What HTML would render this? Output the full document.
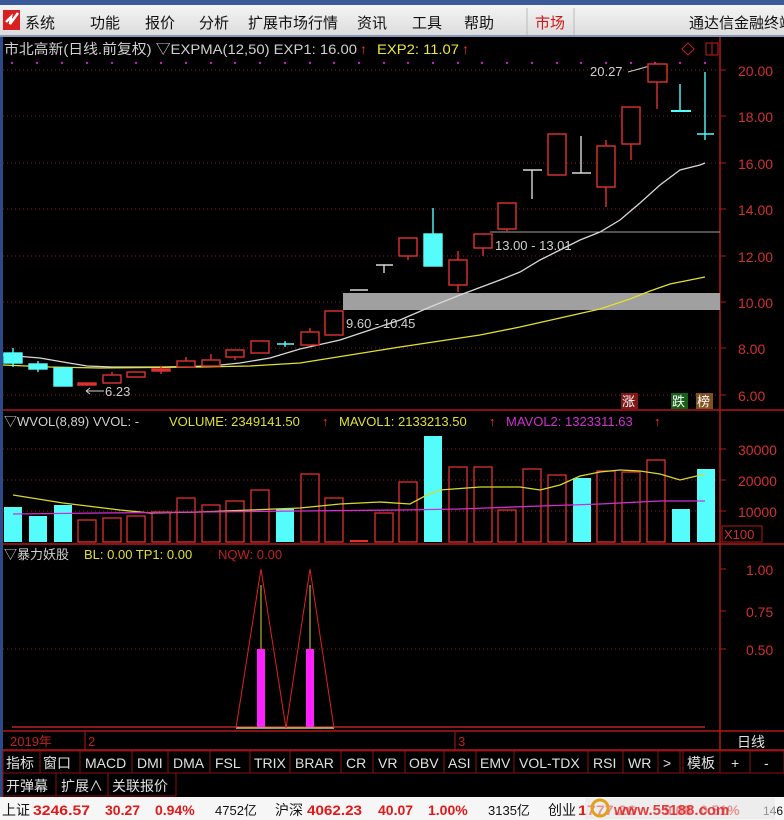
<!DOCTYPE html>
<html><head><meta charset="utf-8"><style>
html,body{margin:0;padding:0;width:784px;height:820px;overflow:hidden;background:#000}
svg{display:block}
text{font-family:"Liberation Sans","Noto Sans CJK SC",sans-serif}
</style></head><body>
<svg width="784" height="820" viewBox="0 0 784 820" xmlns="http://www.w3.org/2000/svg">
<defs>
<linearGradient id="tb" x1="0" y1="0" x2="0" y2="1"><stop offset="0" stop-color="#f4f4f4"/><stop offset="1" stop-color="#dcdcdc"/></linearGradient>
</defs>
<rect x="0" y="0" width="784" height="820" fill="#000"/>
<!-- top bar -->
<rect x="0" y="0" width="784" height="5" fill="#3a5a9a"/>
<rect x="0" y="5" width="784" height="31" fill="url(#tb)"/>
<rect x="0" y="35" width="784" height="2" fill="#8898b8"/>
<path d="M3 10 L20 10 L20 30 L3 30 Z" fill="#d82020"/>
<path d="M6 22 L11 17 L10 24 L18 13" stroke="#fff" stroke-width="2.5" fill="none"/>
<g font-size="15" fill="#111">
<text x="25" y="28">系统</text><text x="90" y="28">功能</text><text x="145" y="28">报价</text><text x="199" y="28">分析</text><text x="248" y="28">扩展市场行情</text><text x="357" y="28">资讯</text><text x="412" y="28">工具</text><text x="464" y="28">帮助</text>
<text x="535" y="28" fill="#d01818">市场</text>
<text x="689" y="28">通达信金融终端</text>
</g>
<line x1="527" y1="8" x2="527" y2="35" stroke="#bbb"/><line x1="574" y1="8" x2="574" y2="35" stroke="#bbb"/>
<!-- left blue strip -->
<rect x="0" y="37" width="3" height="760" fill="#2a4a8a"/>
<!-- grid -->
<g stroke="#8a1a1a" stroke-dasharray="1,3">
<line x1="3" y1="70" x2="720" y2="70"/><line x1="3" y1="116" x2="720" y2="116"/><line x1="3" y1="163" x2="720" y2="163"/><line x1="3" y1="209" x2="720" y2="209"/><line x1="3" y1="256" x2="720" y2="256"/><line x1="3" y1="302" x2="720" y2="302"/><line x1="3" y1="348" x2="720" y2="348"/><line x1="3" y1="395" x2="720" y2="395"/>
<line x1="3" y1="449" x2="720" y2="449"/><line x1="3" y1="480" x2="720" y2="480"/><line x1="3" y1="511" x2="720" y2="511"/>
<line x1="3" y1="649" x2="720" y2="649"/>
</g>
<!-- panel separators -->
<g stroke="#b01818" stroke-width="1.5">
<line x1="720" y1="37" x2="720" y2="750"/>
<line x1="3" y1="410" x2="784" y2="410"/>
<line x1="3" y1="544" x2="784" y2="544"/>
<line x1="3" y1="731" x2="784" y2="731"/>
<line x1="3" y1="750" x2="784" y2="750"/>
</g>
<!-- header -->
<g font-size="14">
<text x="4" y="54" fill="#d0d0d0" textLength="353" lengthAdjust="spacingAndGlyphs">市北高新(日线.前复权) ▽EXPMA(12,50)  EXP1: 16.00</text>
<text x="360" y="54" fill="#ff3030">↑</text>
<text x="377" y="54" fill="#e8e840" textLength="82" lengthAdjust="spacingAndGlyphs">EXP2: 11.07</text>
<text x="462" y="54" fill="#ff3030">↑</text>
</g>
<path d="M688 43 L694 49 L688 55 L682 49 Z" stroke="#c02020" fill="none"/>
<rect x="706" y="43" width="12" height="12" stroke="#c02020" fill="none"/><line x1="712" y1="43" x2="712" y2="55" stroke="#c02020"/>
<g fill="#c020c0">
<circle cx="12" cy="63" r="1.2"/><circle cx="37" cy="63" r="1.2"/><circle cx="62" cy="63" r="1.2"/><circle cx="87" cy="63" r="1.2"/><circle cx="112" cy="63" r="1.2"/><circle cx="136" cy="63" r="1.2"/><circle cx="161" cy="63" r="1.2"/><circle cx="186" cy="63" r="1.2"/><circle cx="211" cy="63" r="1.2"/><circle cx="235" cy="63" r="1.2"/><circle cx="260" cy="63" r="1.2"/><circle cx="285" cy="63" r="1.2"/><circle cx="310" cy="63" r="1.2"/><circle cx="334" cy="63" r="1.2"/><circle cx="359" cy="63" r="1.2"/><circle cx="384" cy="63" r="1.2"/><circle cx="408" cy="63" r="1.2"/><circle cx="433" cy="63" r="1.2"/><circle cx="458" cy="63" r="1.2"/><circle cx="482" cy="63" r="1.2"/><circle cx="507" cy="63" r="1.2"/><circle cx="532" cy="63" r="1.2"/><circle cx="557" cy="63" r="1.2"/><circle cx="581" cy="63" r="1.2"/><circle cx="606" cy="63" r="1.2"/><circle cx="631" cy="63" r="1.2"/><circle cx="655" cy="63" r="1.2"/><circle cx="680" cy="63" r="1.2"/><circle cx="705" cy="63" r="1.2"/>
</g>
<!-- price axis labels -->
<g font-size="14" fill="#d03030">
<text x="738" y="76">20.00</text><text x="738" y="122">18.00</text><text x="738" y="169">16.00</text><text x="738" y="215">14.00</text><text x="738" y="262">12.00</text><text x="738" y="308">10.00</text><text x="738" y="354">8.00</text><text x="738" y="401">6.00</text>
<text x="738" y="455">30000</text><text x="738" y="486">20000</text><text x="738" y="517">10000</text>
<text x="746" y="575">1.00</text><text x="746" y="617">0.75</text><text x="746" y="655">0.50</text>
</g>
<g stroke="#b01818">
<line x1="720" y1="70" x2="726" y2="70"/><line x1="720" y1="116" x2="726" y2="116"/><line x1="720" y1="163" x2="726" y2="163"/><line x1="720" y1="209" x2="726" y2="209"/><line x1="720" y1="256" x2="726" y2="256"/><line x1="720" y1="302" x2="726" y2="302"/><line x1="720" y1="348" x2="726" y2="348"/><line x1="720" y1="395" x2="726" y2="395"/>
<line x1="720" y1="449" x2="726" y2="449"/><line x1="720" y1="480" x2="726" y2="480"/><line x1="720" y1="511" x2="726" y2="511"/>
<line x1="720" y1="569" x2="726" y2="569"/><line x1="720" y1="611" x2="726" y2="611"/><line x1="720" y1="649" x2="726" y2="649"/>
</g>
<rect x="722" y="526" width="40" height="16" stroke="#b01818" fill="none"/>
<text x="724" y="539" font-size="13" fill="#d03030">X100</text>
<!-- gray zone -->
<rect x="343" y="293" width="377" height="17" fill="#a0a0a0"/>
<line x1="490" y1="232" x2="720" y2="232" stroke="#a0a0a0"/>
<g font-size="13" fill="#d0d0d0">
<text x="346" y="328">9.60 - 10.45</text>
<text x="495" y="250">13.00 - 13.01</text>
<text x="105" y="396">6.23</text>
<text x="590" y="76">20.27</text>
</g>
<path d="M86 391 L104 391 M86 391 L90 388 M86 391 L90 394" stroke="#d0d0d0" fill="none"/>
<path d="M628 72 L646 67 L652 66" stroke="#d0d0d0" fill="none"/>
<!-- EMA lines -->
<polyline points="3,355 40,358 63,362 87,366 112,367 161,367 211,366 240,363 270,358 300,349 340,340 370,330 400,320 430,307 460,295 500,280 520,272 540,260 560,250 580,240 600,232 620,220 640,203 660,185 680,170 700,165 705,163" stroke="#d8d8d8" stroke-width="1.3" fill="none"/>
<polyline points="3,365 50,367 100,368 200,367 250,366 300,363 350,355 400,347 440,341 480,335 520,327 560,318 600,309 630,299 650,291 670,284 690,280 705,277" stroke="#e0e030" stroke-width="1.3" fill="none"/>
<!-- candles -->
<g stroke="#e03030" stroke-width="1.4" fill="#000">
<line x1="87" y1="383" x2="87" y2="386"/><rect x="78" y="383" width="18" height="2" fill="#e03030"/>
<line x1="112" y1="372" x2="112" y2="375"/><rect x="103" y="375" width="18" height="8"/>
<rect x="127" y="372" width="18" height="5"/>
<line x1="161" y1="366" x2="161" y2="374"/><rect x="152" y="369" width="18" height="2" fill="#e03030"/>
<line x1="186" y1="357" x2="186" y2="361"/><rect x="177" y="361" width="18" height="6"/>
<line x1="211" y1="354" x2="211" y2="360"/><rect x="202" y="360" width="18" height="6"/>
<line x1="235" y1="357" x2="235" y2="360"/><rect x="226" y="350" width="18" height="7"/>
<rect x="251" y="341" width="18" height="12"/>
<line x1="310" y1="328" x2="310" y2="332"/><rect x="301" y="332" width="18" height="13"/>
<rect x="325" y="311" width="18" height="24"/>
<line x1="408" y1="256" x2="408" y2="260"/><rect x="399" y="238" width="18" height="18"/>
<line x1="458" y1="251" x2="458" y2="260"/><line x1="458" y1="285" x2="458" y2="292"/><rect x="449" y="260" width="18" height="25"/>
<line x1="483" y1="248" x2="483" y2="256"/><rect x="474" y="234" width="18" height="14"/>
<line x1="507" y1="229" x2="507" y2="232"/><rect x="498" y="203" width="18" height="26"/>
<rect x="548" y="134" width="18" height="41"/>
<line x1="606" y1="140" x2="606" y2="146"/><line x1="606" y1="187" x2="606" y2="207"/><rect x="597" y="146" width="18" height="41"/>
<line x1="631" y1="144" x2="631" y2="160"/><rect x="622" y="107" width="18" height="37"/>
<line x1="657" y1="82" x2="657" y2="109"/><rect x="648" y="64" width="19" height="18"/>
</g>
<g stroke="#d8d8d8" stroke-width="1.4">
<line x1="350" y1="290" x2="368" y2="290"/>
<line x1="376" y1="265" x2="393" y2="265"/><line x1="384" y1="265" x2="384" y2="273"/>
<line x1="523" y1="170" x2="542" y2="170"/><line x1="532" y1="170" x2="532" y2="199"/>
<line x1="572" y1="173" x2="591" y2="173"/><line x1="581" y1="136" x2="581" y2="173"/>
</g>
<g fill="#54fcfc" stroke="#54fcfc" stroke-width="1.4">
<line x1="13" y1="348" x2="13" y2="367"/><rect x="4" y="353" width="18" height="10"/>
<line x1="38" y1="361" x2="38" y2="372"/><rect x="29" y="364" width="18" height="5"/>
<rect x="54" y="368" width="18" height="18"/>
<line x1="277" y1="344" x2="294" y2="344"/><line x1="285" y1="341" x2="285" y2="347"/>
<line x1="433" y1="208" x2="433" y2="234"/><rect x="424" y="234" width="18" height="32"/>
<line x1="680" y1="84" x2="680" y2="111"/><line x1="671" y1="111" x2="691" y2="111" stroke-width="2"/>
<line x1="705" y1="72" x2="705" y2="140"/><line x1="697" y1="134" x2="714" y2="134"/>
</g>
<!-- 涨 跌 榜 -->
<g font-size="13">
<rect x="621" y="393" width="17" height="16" fill="#801818"/><text x="622" y="406" fill="#fff">涨</text>
<rect x="671" y="393" width="17" height="16" fill="#186018"/><text x="672" y="406" fill="#fff">跌</text>
<rect x="696" y="393" width="17" height="16" fill="#805020"/><text x="697" y="406" fill="#fff">榜</text>
</g>
<!-- volume header -->
<g font-size="13">
<text x="4" y="426" fill="#d0d0d0">▽WVOL(8,89)  VVOL: -</text>
<text x="169" y="426" fill="#e0e030">VOLUME: 2349141.50</text>
<text x="322" y="426" fill="#ff3030">↑</text>
<text x="339" y="426" fill="#e0e030">MAVOL1: 2133213.50</text>
<text x="489" y="426" fill="#ff3030">↑</text>
<text x="506" y="426" fill="#d030d0">MAVOL2: 1323311.63</text>
<text x="654" y="426" fill="#ff3030">↑</text>
</g>
<!-- volume bars -->
<g fill="#54fcfc">
<rect x="4" y="507" width="18" height="35"/><rect x="29" y="516" width="18" height="26"/><rect x="54" y="505" width="18" height="37"/>
<rect x="276" y="509" width="18" height="33"/><rect x="424" y="436" width="18" height="106"/><rect x="573" y="478" width="18" height="64"/>
<rect x="672" y="509" width="18" height="33"/><rect x="697" y="469" width="18" height="73"/>
</g>
<g fill="none" stroke="#e03030" stroke-width="1.3">
<rect x="78" y="520" width="18" height="22"/><rect x="103" y="518" width="18" height="24"/><rect x="127" y="516" width="18" height="26"/><rect x="152" y="512" width="18" height="30"/><rect x="177" y="498" width="18" height="44"/><rect x="202" y="505" width="18" height="37"/><rect x="226" y="501" width="18" height="41"/><rect x="251" y="490" width="18" height="52"/>
<rect x="301" y="474" width="18" height="68"/><rect x="325" y="498" width="18" height="44"/>
<rect x="375" y="513" width="18" height="29"/><rect x="399" y="482" width="18" height="60"/><rect x="449" y="467" width="18" height="75"/><rect x="474" y="467" width="18" height="75"/><rect x="498" y="510" width="18" height="32"/><rect x="523" y="469" width="18" height="73"/><rect x="548" y="475" width="18" height="67"/><rect x="597" y="471" width="18" height="71"/><rect x="622" y="472" width="18" height="70"/><rect x="647" y="460" width="18" height="82"/>
</g>
<rect x="350" y="540" width="18" height="2" fill="#e03030"/>
<polyline points="13,495 63,503 120,510 150,513 200,512 250,510 300,508 340,504 380,502 410,504 425,496 440,490 480,487 520,487 540,490 560,485 580,476 600,472 620,470 640,471 660,474 680,480 705,474" stroke="#d8d830" stroke-width="1.3" fill="none"/>
<polyline points="13,514 100,513 200,512 300,511 400,510 460,509 540,506 600,504 660,501 705,501" stroke="#d030d0" stroke-width="1.3" fill="none"/>
<!-- indicator panel -->
<g font-size="13">
<text x="4" y="559" fill="#d0d0d0">▽暴力妖股</text>
<text x="84" y="559" fill="#e0e030">BL: 0.00  TP1: 0.00</text>
<text x="218" y="559" fill="#c02020">NQW: 0.00</text>
</g>
<line x1="12" y1="727" x2="705" y2="727" stroke="#8a1a1a" stroke-width="2"/>
<line x1="236" y1="728" x2="334" y2="728" stroke="#c8c880" stroke-width="1.5"/>
<path d="M236 728 L261 569 L286 728 L310 569 L334 728" stroke="#e02020" fill="none"/>
<line x1="261" y1="585" x2="261" y2="649" stroke="#d8d830"/><line x1="310" y1="585" x2="310" y2="649" stroke="#d8d830"/>
<rect x="257" y="649" width="8" height="78" fill="#ff20ff"/><rect x="306" y="649" width="8" height="78" fill="#ff20ff"/>
<!-- date row -->
<g font-size="13">
<text x="10" y="746" fill="#c02020">2019年</text>
<text x="88" y="746" fill="#c02020">2</text>
<text x="458" y="746" fill="#c02020">3</text>
<text x="737" y="747" fill="#e0e0e0" font-size="14">日线</text>
</g>
<g stroke="#b01818"><line x1="85" y1="732" x2="85" y2="750"/><line x1="455" y1="732" x2="455" y2="750"/></g>
<!-- buttons -->
<g stroke="#8a1010" fill="none">
<rect x="3" y="751" width="781" height="22"/>
<rect x="3" y="773" width="173" height="23"/>
<path d="M40 751V773M80 751V773M132 751V773M168 751V773M210 751V773M250 751V773M290 751V773M341 751V773M373 751V773M405 751V773M444 751V773M476 751V773M514 751V773M588 751V773M623 751V773M658 751V773M680 751V773M683 751V773M720 751V773M750 751V773M56 773V796M108 773V796"/>
</g>
<g font-size="14" fill="#e0e0e0">
<text x="6" y="768">指标</text><text x="43" y="768">窗口</text><text x="85" y="768">MACD</text><text x="137" y="768">DMI</text><text x="173" y="768">DMA</text><text x="215" y="768">FSL</text><text x="254" y="768">TRIX</text><text x="295" y="768">BRAR</text><text x="346" y="768">CR</text><text x="378" y="768">VR</text><text x="409" y="768">OBV</text><text x="448" y="768">ASI</text><text x="480" y="768">EMV</text><text x="519" y="768">VOL-TDX</text><text x="593" y="768">RSI</text><text x="628" y="768">WR</text><text x="663" y="768">&gt;</text><text x="687" y="768">模板</text><text x="731" y="768">+</text><text x="764" y="768">-</text>
<text x="6" y="791">开弹幕</text><text x="61" y="791">扩展∧</text><text x="112" y="791">关联报价</text>
</g>
<!-- status bar -->
<rect x="0" y="797" width="784" height="23" fill="#f6f6f6"/>
<g font-size="14">
<text x="2" y="815" fill="#111">上证</text>
<g fill="#e01818" font-weight="bold">
<text x="33" y="815" textLength="57" lengthAdjust="spacingAndGlyphs">3246.57</text>
<text x="105" y="815">30.27</text><text x="155" y="815">0.94%</text>
<text x="307" y="815" textLength="55" lengthAdjust="spacingAndGlyphs">4062.23</text>
<text x="378" y="815">40.07</text><text x="428" y="815">1.00%</text>
<text x="578" y="815" textLength="58" lengthAdjust="spacingAndGlyphs">1777.26</text>
<text x="664" y="815">9.08</text><text x="700" y="815">0.51%</text>
</g>
<text x="215" y="815" fill="#111" font-size="13">4752亿</text>
<text x="275" y="815" fill="#111">沪深</text>
<text x="488" y="815" fill="#111" font-size="13">3135亿</text>
<text x="548" y="815" fill="#111">创业</text>
<text x="763" y="815" fill="#111" font-size="12">146</text>
</g>
<rect x="585" y="798" width="190" height="21" fill="#e8e8e8" opacity="0.6"/>
<circle cx="600" cy="808" r="8" fill="none" stroke="#e0a020" stroke-width="3"/>
<text x="614" y="815" font-size="15" font-weight="bold" fill="#e02020" opacity="0.85">www.55188.com</text>
</svg>
</body></html>
